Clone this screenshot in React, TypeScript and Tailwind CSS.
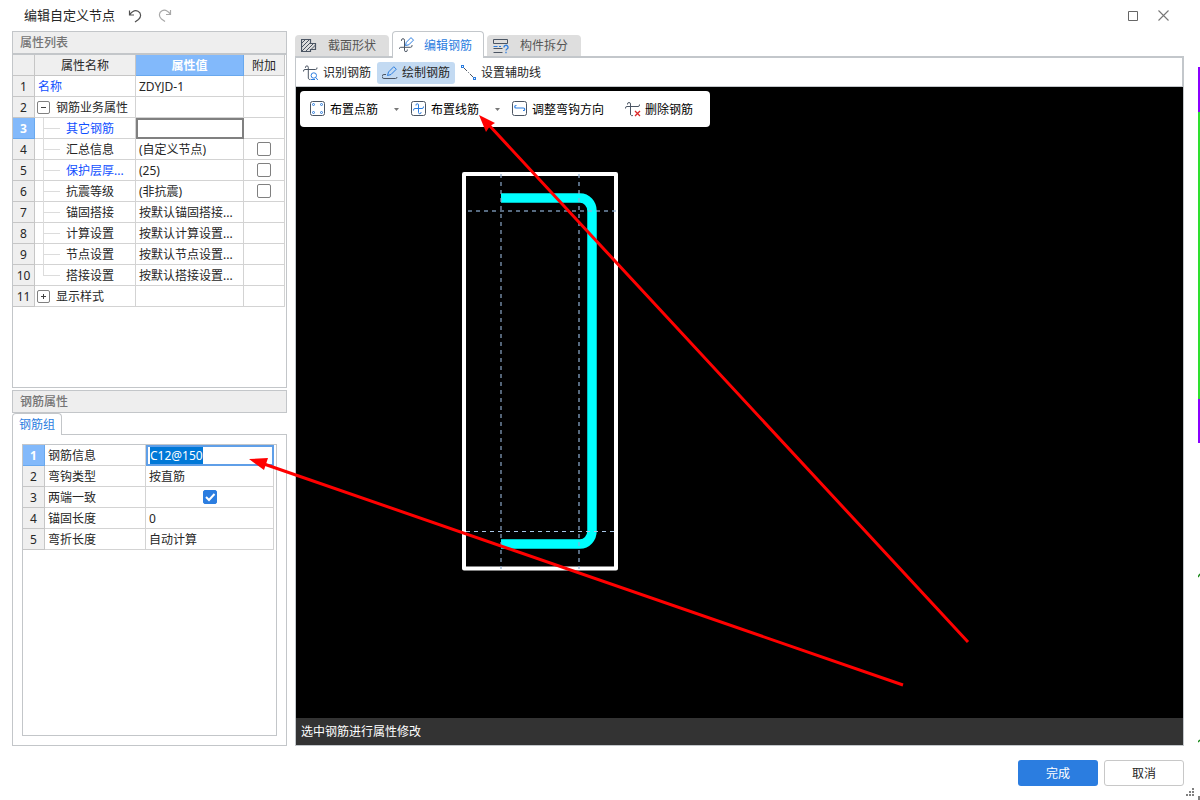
import { useEffect, useRef, useState } from "react";
import type { ReactNode } from "react";
import clsx from "clsx";

type PropertyRow = {
  name: string;
  value?: string;
  kind?: "group-open" | "group-closed" | "child" | "last-child";
  link?: boolean;
  extra?: boolean;
};

const propertyRows: PropertyRow[] = [
  { name: "名称", value: "ZDYJD-1", link: true },
  { name: "钢筋业务属性", kind: "group-open" },
  { name: "其它钢筋", kind: "child", link: true },
  { name: "汇总信息", value: "(自定义节点)", kind: "child", extra: true },
  { name: "保护层厚...", value: "(25)", kind: "child", link: true, extra: true },
  { name: "抗震等级", value: "(非抗震)", kind: "child", extra: true },
  { name: "锚固搭接", value: "按默认锚固搭接...", kind: "child" },
  { name: "计算设置", value: "按默认计算设置...", kind: "child" },
  { name: "节点设置", value: "按默认节点设置...", kind: "child" },
  { name: "搭接设置", value: "按默认搭接设置...", kind: "last-child" },
  { name: "显示样式", kind: "group-closed" },
];

const SELECTED_ROW = 2;

function Icon({ children }: { children: ReactNode }) {
  return (
    <svg width="16" height="16" viewBox="0 0 16 16" fill="none" stroke="#4b5563" className="shrink-0" aria-hidden="true">
      {children}
    </svg>
  );
}

function SectionIcon() {
  return (
    <Icon>
      <path d="M.5 1.5h9v4h5v6h-5v2h-9z" strokeWidth="1.2" />
      <path d="M.5 5.500l4-4M.5 9.500l8-8M.5 13.500l9-9M4.500 13.500l8-8M9.500 12l5-5" />
    </Icon>
  );
}

function EditRebarIcon() {
  return (
    <Icon>
      <path d="M2.500 4V3.200a1.500 1.500 0 0 1 3 0v10a1.400 1.400 0 0 0 2.800 0v-.7M.5 12v-.5a1.200 1.200 0 0 1 1.200-1.200h9.800A1.500 1.500 0 0 0 13 8.800V8" />
      <path d="M6.500 8.500l.8-3.200L12 .6l2.500 2.500-4.700 4.700z" stroke="#2b7de0" />
    </Icon>
  );
}

function SplitIcon() {
  return (
    <Icon>
      <path d="M.5 1.500h14v4H.5zM9.500 10.500H.5M.5 14.500h9" />
      <path d="M.5 8.500h4M6 8.500h2" stroke="#2b7de0" />
      <path d="M11 9.500a2 2 0 1 1 3 1.500c-.8.5-1 .8-1 1.500M13 13.700v1.500" stroke="#2b7de0" strokeWidth="1.300" />
    </Icon>
  );
}

function IdentifyIcon() {
  return (
    <Icon>
      <path d="M.5 6.500V6A1.500 1.500 0 0 1 2 4.500h10.500A1.500 1.500 0 0 0 14 3v-.5M2.500 3v-.7a1.400 1.400 0 0 1 2.800 0V13a1.500 1.500 0 0 0 2.200 1.300" />
      <circle cx="10.800" cy="10.500" r="2.700" stroke="#2b7de0" />
      <path d="M12.800 12.500l2 2.500M8 14.500h4" stroke="#2b7de0" />
    </Icon>
  );
}

function DrawIcon() {
  return (
    <Icon>
      <path d="M4 9.500H2a2 2 0 0 0 0 4h11.500A1.500 1.500 0 0 0 15 12" />
      <path d="M5.500 10.500l1-3.500L11.800 1.700l2.500 2.500L9 9.500z" stroke="#2b7de0" />
    </Icon>
  );
}

function GuideLineIcon() {
  return (
    <Icon>
      <path d="M2.500 2.500l11 11" strokeDasharray="5 1.500 1 1.500" />
      <rect x=".5" y=".5" width="2" height="2" stroke="#2b7de0" />
      <rect x="12.500" y="12.500" width="2" height="2" stroke="#2b7de0" />
    </Icon>
  );
}

function PointRebarIcon() {
  return (
    <Icon>
      <rect x=".5" y=".5" width="14" height="14" rx="2" />
      <g stroke="#2b7de0">
        <circle cx="3.500" cy="3.500" r="1" />
        <circle cx="11.500" cy="3.500" r="1" />
        <circle cx="3.500" cy="11.500" r="1" />
        <circle cx="11.500" cy="11.500" r="1" />
      </g>
    </Icon>
  );
}

function LineRebarIcon() {
  return (
    <Icon>
      <rect x=".5" y=".5" width="14" height="14" rx="2" />
      <path
        d="M5 4.500V4a1.250 1.250 0 0 1 2.500 0v7.500a1.250 1.250 0 0 0 2.500 0V11M2.500 9.500V9A1.500 1.500 0 0 1 4 7.500h7A1.500 1.500 0 0 0 12.500 6v-.5"
        stroke="#2b7de0"
      />
    </Icon>
  );
}

function HookIcon() {
  return (
    <Icon>
      <rect x=".5" y=".5" width="14" height="14" rx="2" />
      <path d="M4.500 4.500H4a1.200 1.200 0 0 0 0 2.500h7.500a1.200 1.200 0 0 1 0 2.500H11" stroke="#2b7de0" strokeWidth="1.200" />
    </Icon>
  );
}

function DeleteRebarIcon() {
  return (
    <Icon>
      <path d="M.5 7.500V7A1.500 1.500 0 0 1 2 5.500h11A1.500 1.500 0 0 0 14.500 4v-.5M2.500 3.500V3a1.500 1.500 0 0 1 3 0v10A1.500 1.500 0 0 0 8 14.300" />
      <path d="M10 10l5 5M15 10l-5 5" stroke="#dc2626" strokeWidth="1.300" />
    </Icon>
  );
}

function PanelTitle({ children }: { children: ReactNode }) {
  return (
    <h2 className="flex h-[23px] shrink-0 items-center border border-[#c3c6c9] bg-[#eeeeee] px-[7px] font-medium text-[#757575]">
      {children}
    </h2>
  );
}

function TreeName({ row }: { row: PropertyRow }) {
  if (row.kind === "group-open" || row.kind === "group-closed") {
    const open = row.kind === "group-open";
    return (
      <span className="flex h-5 items-center gap-[6px] pl-[2px]">
        <button
          type="button"
          aria-label={row.name}
          aria-expanded={open}
          className="flex size-[13px] items-center justify-center rounded-xs border border-[#808080]"
        >
          <svg width="5" height="5" viewBox="0 0 5 5" stroke="#404040" aria-hidden="true">
            <path d={open ? "M0 2.500h5" : "M0 2.500h5M2.500 0v5"} />
          </svg>
        </button>
        {row.name}
      </span>
    );
  }
  if (row.kind) {
    return (
      <span className="flex h-5 items-center gap-[6px] pl-2">
        <span className="flex h-[21px] w-[17px] shrink-0 flex-col">
          <span className="h-[11px] border-b border-l border-[#dcdcdc]" />
          {row.kind === "child" && <span className="flex-1 border-l border-[#dcdcdc]" />}
        </span>
        {row.name}
      </span>
    );
  }
  return <span className="flex h-5 items-center pl-[3px]">{row.name}</span>;
}

function RowNumber({ value, selected }: { value: number; selected: boolean }) {
  return (
    <th
      scope="row"
      className={clsx(
        "border-r border-b p-0 text-center",
        selected
          ? "border-[#68a8ee] bg-[#82b9fb] font-bold text-white"
          : "border-[#c6c6c6] bg-[#efefef] font-normal",
      )}
    >
      {value}
    </th>
  );
}

const cell = "h-[21px] border-r border-b border-[#d3d3d3] p-0";

function PropertyTable() {
  return (
    <table className="w-full table-fixed border-separate border-spacing-0 whitespace-nowrap">
      <colgroup>
        <col className="w-[22px]" />
        <col className="w-[101px]" />
        <col />
        <col className="w-[41px]" />
      </colgroup>
      <thead>
        <tr className="h-[21px] bg-[#efefef]">
          <th className="border-r border-b border-[#c6c6c6] p-0" aria-label="#" />
          <th className="border-r border-b border-[#c6c6c6] p-0 font-normal">属性名称</th>
          <th className="border-r border-b border-[#68a8ee] bg-[#82b9fb] p-0 font-bold text-white">属性值</th>
          <th className="border-r border-b border-[#c6c6c6] p-0 font-normal">附加</th>
        </tr>
      </thead>
      <tbody>
        {propertyRows.map((row, i) => (
          <tr key={row.name} className="h-[21px]">
            <RowNumber value={i + 1} selected={i === SELECTED_ROW} />
            <td className={clsx(cell, row.link && "text-[#1050ff]")}>
              <TreeName row={row} />
            </td>
            <td className={clsx(cell, "pl-[3px]", i === SELECTED_ROW && "outline-2 -outline-offset-2 outline-[#808080]")}>
              {i === SELECTED_ROW ? (
                <input aria-label={row.name} className="block h-4 w-full bg-transparent outline-none" />
              ) : (
                row.value
              )}
            </td>
            <td className={cell}>
              {row.extra && (
                <input
                  type="checkbox"
                  aria-label={`附加 ${row.name}`}
                  className="mx-auto block size-[14px] appearance-none rounded-xs border border-[#808080] checked:bg-[#2b7de0]"
                />
              )}
            </td>
          </tr>
        ))}
      </tbody>
    </table>
  );
}

function RebarTable() {
  const [info, setInfo] = useState("C12@150");
  const [same, setSame] = useState(true);
  const infoRef = useRef<HTMLInputElement>(null);

  useEffect(() => {
    infoRef.current?.focus();
    infoRef.current?.select();
  }, []);

  const rows: { name: string; value: ReactNode }[] = [
    {
      name: "钢筋信息",
      value: (
        <input
          ref={infoRef}
          aria-label="钢筋信息"
          value={info}
          onChange={(e) => setInfo(e.target.value)}
          className="block h-[21px] w-full border-2 border-[#5f9fe8] bg-white pl-[2px] outline-none selection:bg-[#0078d7] selection:text-white"
        />
      ),
    },
    { name: "弯钩类型", value: <span className="pl-[3px]">按直筋</span> },
    {
      name: "两端一致",
      value: (
        <span className="relative mx-auto block size-[14px]">
          <input
            type="checkbox"
            aria-label="两端一致"
            checked={same}
            onChange={(e) => setSame(e.target.checked)}
            className="block size-[14px] appearance-none rounded-xs border border-[#2b7de0] checked:bg-[#2b7de0]"
          />
          {same && (
            <svg className="pointer-events-none absolute inset-0" width="14" height="14" viewBox="0 0 14 14" fill="none" stroke="#fff" strokeWidth="2">
              <path d="M3 7l3 3 5.500-6" />
            </svg>
          )}
        </span>
      ),
    },
    { name: "锚固长度", value: <span className="pl-[3px]">0</span> },
    { name: "弯折长度", value: <span className="pl-[3px]">自动计算</span> },
  ];

  return (
    <table className="w-full table-fixed border-separate border-spacing-0 whitespace-nowrap">
      <colgroup>
        <col className="w-[22px]" />
        <col className="w-[101px]" />
        <col />
      </colgroup>
      <tbody>
        {rows.map((row, i) => (
          <tr key={row.name} className="h-[21px]">
            <RowNumber value={i + 1} selected={i === 0} />
            <td className={clsx(cell, "pl-[3px]")}>{row.name}</td>
            <td className={i === 0 ? "h-[21px] p-0" : cell}>{row.value}</td>
          </tr>
        ))}
      </tbody>
    </table>
  );
}

function Tab({ icon, label, active }: { icon: ReactNode; label: string; active?: boolean }) {
  return (
    <button
      type="button"
      role="tab"
      aria-selected={!!active}
      className={clsx(
        "flex items-center rounded-t-[4px] pl-[6px]",
        active
          ? "relative -mb-[2px] h-[27px] gap-[9px] border border-b-0 border-[#c3c7cb] bg-white pr-[11px] text-[#2b7de0]"
          : "h-[21px] gap-[11px] bg-[#dedede] pr-[13px] text-[#555555]",
      )}
    >
      {icon}
      {label}
    </button>
  );
}

function ToolButton({ icon, label, active }: { icon: ReactNode; label: string; active?: boolean }) {
  return (
    <button
      type="button"
      className={clsx("flex h-[22px] items-center gap-1 rounded-[3px] px-[5px]", active && "bg-[#c3daf2]")}
    >
      {icon}
      {label}
    </button>
  );
}

function CanvasButton({ icon, label }: { icon: ReactNode; label: string }) {
  return (
    <button type="button" className="flex h-full items-center gap-1">
      {icon}
      {label}
    </button>
  );
}

function MenuButton({ label }: { label: string }) {
  return (
    <button type="button" aria-label={label} className="flex h-full w-[33px] items-center justify-center pl-1">
      <svg width="5" height="3" viewBox="0 0 5 3" fill="#777" aria-hidden="true">
        <path d="M0 0h5L2.500 3z" />
      </svg>
    </button>
  );
}

function RebarDrawing() {
  return (
    <svg className="absolute inset-0 size-full" fill="none" aria-hidden="true">
      <rect x="168" y="87" width="152" height="394.500" stroke="#fff" strokeWidth="4" strokeLinejoin="round" />
      <path d="M205 111H284A12 13 0 0 1 296 124V444A12 13 0 0 1 284 457H205" stroke="#00ffff" strokeWidth="9.500" />
      <g strokeDasharray="4 4">
        <path d="M205 87v395" stroke="#8aa6c6" strokeWidth="1.200" />
        <path d="M283 87v395" stroke="#8fb0d6" strokeOpacity=".6" strokeWidth="2" />
        <path d="M172 124h148" stroke="#8fb0d6" strokeOpacity=".6" strokeWidth="2" />
        <path d="M170 444.500h148" stroke="#a9c6e6" />
      </g>
    </svg>
  );
}

export default function App() {
  return (
    <div className="relative flex h-screen flex-col overflow-hidden bg-white font-['Noto_Sans','Noto_Sans_CJK_SC',sans-serif] text-[12px] leading-[17px] text-[#262626]">
      <header className="flex h-[31px] shrink-0 items-center pr-[31px] pl-6">
        <h1 className="text-[13px]">编辑自定义节点</h1>
        <button type="button" aria-label="撤销" className="ml-[13px]">
          <svg width="14" height="14" viewBox="0 0 14 14" fill="none" stroke="#505050" strokeWidth="1.200">
            <path d="M1.500 1.500v4.500h4.500M1.500 6C4 2.500 7.500 1 10 2.200c3.500 1.800 3.300 6 .5 8.300L7 13" />
          </svg>
        </button>
        <button type="button" aria-label="重做" className="ml-4">
          <svg width="14" height="14" viewBox="0 0 14 14" fill="none" stroke="#a8a8a8" strokeWidth="1.200">
            <path d="M12.500 1v4.500H8M12.500 5.500C10 2 6.500.500 4 1.700c-3.500 1.800-3.300 6-.5 8.300L7 12.500" />
          </svg>
        </button>
        <button type="button" aria-label="最大化" className="ml-auto">
          <svg width="10" height="10" viewBox="0 0 10 10" fill="none" stroke="#666">
            <path d="M.5.5h9v9h-9z" />
          </svg>
        </button>
        <button type="button" aria-label="关闭" className="ml-5">
          <svg width="11" height="11" viewBox="0 0 11 11" stroke="#777" strokeWidth="1.100">
            <path d="M.5.5l10 10M10.500.5l-10 10" />
          </svg>
        </button>
      </header>

      <main className="flex min-h-0 flex-1 gap-2 pr-4 pl-3">
        <div className="grid w-[275px] shrink-0 grid-rows-[minmax(357px,1fr)_minmax(356px,1fr)] gap-[2px]">
          <section className="flex flex-col">
            <PanelTitle>属性列表</PanelTitle>
            <div className="flex-1 border border-[#c3c6c9] pr-px">
              <PropertyTable />
            </div>
          </section>

          <section className="flex flex-col">
            <PanelTitle>钢筋属性</PanelTitle>
            <button
              type="button"
              className="relative -mb-px h-[22px] self-start rounded-t-[4px] border border-b-0 border-[#c3c6c9] bg-white px-[6px] text-[#2b7de0]"
            >
              钢筋组
            </button>
            <div className="flex flex-1 border border-[#c3c6c9] p-[9px]">
              <div className="flex-1 border border-[#c3c6c9] pr-[2px]">
                <RebarTable />
              </div>
            </div>
          </section>
        </div>

        <div className="flex min-w-0 flex-1 flex-col">
          <div role="tablist" className="flex h-[25px] shrink-0 items-end gap-[3px]">
            <Tab icon={<SectionIcon />} label="截面形状" />
            <Tab icon={<EditRebarIcon />} label="编辑钢筋" active />
            <Tab icon={<SplitIcon />} label="构件拆分" />
          </div>
          <div className="flex h-[31px] shrink-0 items-center gap-px border-t-2 border-r-2 border-b border-l border-[#c3c7cb] pt-px pl-[2px]">
            <ToolButton icon={<IdentifyIcon />} label="识别钢筋" />
            <ToolButton icon={<DrawIcon />} label="绘制钢筋" active />
            <ToolButton icon={<GuideLineIcon />} label="设置辅助线" />
          </div>
          <div className="flex flex-1 flex-col border border-t-0 border-[#c3c7cb]">
            <div className="relative flex-1 bg-black p-1">
              <RebarDrawing />
              <div className="relative flex h-9 w-fit items-center rounded-[4px] bg-white pr-[17px] pl-[10px] text-black">
                <CanvasButton icon={<PointRebarIcon />} label="布置点筋" />
                <MenuButton label="布置点筋选项" />
                <CanvasButton icon={<LineRebarIcon />} label="布置线筋" />
                <MenuButton label="布置线筋选项" />
                <CanvasButton icon={<HookIcon />} label="调整弯钩方向" />
                <span className="w-[21px]" />
                <CanvasButton icon={<DeleteRebarIcon />} label="删除钢筋" />
              </div>
            </div>
            <p className="flex h-[27px] shrink-0 items-center bg-[#333333] px-[5px] text-white">选中钢筋进行属性修改</p>
          </div>
        </div>
      </main>

      <footer className="flex h-[54px] shrink-0 items-center justify-end gap-[6px] pr-4">
        <button type="button" className="h-[26px] w-20 rounded-[3px] bg-[#2b7de0] text-white">
          完成
        </button>
        <button type="button" className="h-[26px] w-20 rounded-[3px] border border-[#c8c8c8] bg-white">
          取消
        </button>
      </footer>

      {/* Resize grip */}
      <svg className="absolute right-0 bottom-0" width="14" height="13" viewBox="0 0 14 13" fill="#808080" aria-hidden="true">
        <path d="M6 1h2v2h-2zM3 4h2v2H3zM6 4h2v2h-2zM0 7h2v2H0zM3 7h2v2H3zM6 7h2v2h-2zM12 9h2v4h-2z" />
      </svg>

      {/* Edge of the model view behind the dialog */}
      <svg className="absolute top-0 right-0" width="2" height="800" viewBox="0 0 2 800" aria-hidden="true">
        <path d="M0 67h2v45H0zM0 399h2v44H0z" fill="#8b00ff" />
        <path d="M0 112h2v287H0z" fill="#2ee02e" />
        <path d="M0 577l2-3M0 742l2-2" stroke="#1a8a1a" strokeWidth="1.500" />
      </svg>

      {/* Pointer arrows */}
      <svg className="pointer-events-none absolute inset-0 size-full" fill="#ff0000" stroke="#ff0000" aria-hidden="true">
        <path d="M968 642L488 124M903 685L264 464" strokeWidth="3" />
        <path d="M479 115l16 8-5 3-4 6zM249 459l19-1-4 12z" stroke="none" />
      </svg>
    </div>
  );
}
